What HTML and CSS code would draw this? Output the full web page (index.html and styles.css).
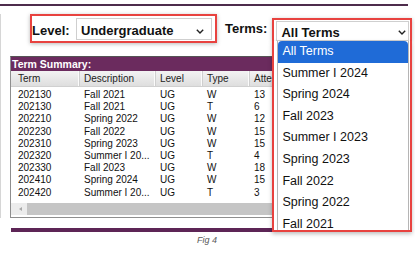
FILE: index.html
```html
<!DOCTYPE html>
<html lang="en">
<head>
<meta charset="utf-8">
<title>Term Summary</title>
<link rel="stylesheet" href="styles.css">
</head>
<body>
<div class="topline"></div>
<div class="content">
  <div class="filters">
    <div class="level-box">
      <span class="label">Level:</span>
      <div class="select level-select">
        <span class="select-text">Undergraduate</span>
        <svg class="chev" width="8" height="5" viewBox="0 0 8 5"><path d="M0.8 0.8 L4 4 L7.2 0.8" fill="none" stroke="#222" stroke-width="1.4"/></svg>
      </div>
    </div>
    <span class="label terms-label">Terms:</span>
    <div class="terms-box">
      <div class="select terms-select">
        <span class="select-text">All Terms</span>
        <svg class="chev" width="8" height="5" viewBox="0 0 8 5"><path d="M0.8 0.8 L4 4 L7.2 0.8" fill="none" stroke="#222" stroke-width="1.4"/></svg>
      </div>
      <div class="listbox">
        <ul class="options">
          <li class="opt selected">All Terms</li>
          <li class="opt">Summer I 2024</li>
          <li class="opt">Spring 2024</li>
          <li class="opt">Fall 2023</li>
          <li class="opt">Summer I 2023</li>
          <li class="opt">Spring 2023</li>
          <li class="opt">Fall 2022</li>
          <li class="opt">Spring 2022</li>
          <li class="opt">Fall 2021</li>
        </ul>
      </div>
    </div>
  </div>
  <div class="panel">
    <div class="panel-title">Term Summary:</div>
    <div class="grid head">
      <span>Term</span><span>Description</span><span>Level</span><span>Type</span><span>Atten</span>
    </div>
    <div class="rows">
      <div class="grid row"><span>202130</span><span>Fall 2021</span><span>UG</span><span>W</span><span>13</span></div>
      <div class="grid row"><span>202130</span><span>Fall 2021</span><span>UG</span><span>T</span><span>6</span></div>
      <div class="grid row"><span>202210</span><span>Spring 2022</span><span>UG</span><span>W</span><span>12</span></div>
      <div class="grid row"><span>202230</span><span>Fall 2022</span><span>UG</span><span>W</span><span>15</span></div>
      <div class="grid row"><span>202310</span><span>Spring 2023</span><span>UG</span><span>W</span><span>15</span></div>
      <div class="grid row"><span>202320</span><span>Summer I 20...</span><span>UG</span><span>T</span><span>4</span></div>
      <div class="grid row"><span>202330</span><span>Fall 2023</span><span>UG</span><span>W</span><span>18</span></div>
      <div class="grid row"><span>202410</span><span>Spring 2024</span><span>UG</span><span>W</span><span>15</span></div>
      <div class="grid row"><span>202420</span><span>Summer I 20...</span><span>UG</span><span>T</span><span>3</span></div>
    </div>
    <div class="hscroll">
      <span class="arrow"></span>
      <span class="thumb"></span>
    </div>
  </div>
</div>
<div class="bottombar"></div>
<div class="caption">Fig 4</div>
</body>
</html>
```
FILE: styles.css
```css
* { box-sizing: border-box; }
html, body { margin: 0; padding: 0; background: #fff; }
body {
  width: 415px;
  height: 253px;
  overflow: hidden;
  font-family: "Liberation Sans", Arial, sans-serif;
  color: #111;
}
.topline {
  margin-top: 4px;
  width: 408px;
  height: 2px;
  background: #4e2c4c;
}
.content {
  margin-top: 8px;
  border-left: 1px solid #d6d6d6;
}
.filters {
  display: flex;
  align-items: flex-start;
  height: 29px;
  padding-left: 29px;
  position: relative;
  z-index: 2;
}
.label {
  font-size: 13px;
  font-weight: bold;
  line-height: 15px;
  color: #111;
}
.level-box {
  width: 187px;
  height: 29px;
  border: 2px solid #e8423f;
  box-shadow: 0 1px 4px rgba(0,0,0,0.28);
  display: flex;
  align-items: flex-start;
  padding: 2px 3px 0 0;
  background: #fff;
}
.level-box .label { margin-top: 5px; }
.select {
  display: flex;
  align-items: center;
  background: #fff;
  border: 1px solid #cfcfcf;
}
.select-text {
  font-size: 13px;
  font-weight: bold;
  line-height: 15px;
  padding-top: 3px;
  color: #111;
}
.chev { margin-left: auto; margin-top: 4px; display: block; }
.level-select {
  margin-left: auto;
  width: 136px;
  height: 22px;
  padding: 0 7px 0 4px;
}
.terms-label { margin-left: 8px; margin-top: 7px; }
.terms-box {
  position: relative;
  margin-left: 5px;
  margin-top: 4px;
  width: 140px;
  border: 2px solid #e8423f;
  border-bottom: none;
  padding: 1px 1px 0 2px;
  background: #fff;
  box-shadow: 0 1px 4px rgba(0,0,0,0.25);
}
.terms-select {
  height: 20px;
  padding: 0 2px 0 4px;
}
.terms-select .select-text { padding-top: 2px; }
.terms-select .chev { margin-top: 3px; }
.listbox {
  position: absolute;
  top: 100%;
  left: -2px;
  width: 140px;
  height: 191px;
  border: 2px solid #e8423f;
  border-top: none;
  padding: 0 1px 0 3px;
  background: #fff;
  box-shadow: 0 2px 4px rgba(0,0,0,0.25);
}
.options {
  list-style: none;
  margin: 0;
  padding: 0;
  height: 189px;
  overflow: hidden;
  border-left: 1px solid #b5b5b5;
  border-right: 1px solid #b5b5b5;
}
.opt {
  height: 21.6px;
  line-height: 21.6px;
  font-size: 12.5px;
  padding-left: 4px;
  color: #111;
  white-space: nowrap;
}
.opt.selected {
  background: #1f6bd7;
  color: #fff;
  border-top-left-radius: 4px;
  border-top-right-radius: 4px;
}
.panel {
  margin-top: 13px;
  margin-left: 9px;
  width: 268px;
  border: 1px solid #8e8e8e;
  border-top-color: #555;
  background: #fff;
}
.panel-title {
  height: 14px;
  background: #6b2b5e;
  color: #fff;
  font-size: 10.5px;
  font-weight: bold;
  line-height: 14px;
  padding-left: 1px;
}
.grid {
  display: grid;
  grid-template-columns: 66px 76px 47px 47px 28px;
  padding-left: 2px;
  font-size: 10px;
  white-space: nowrap;
}
.grid span { padding-left: 5px; overflow: hidden; }
.head {
  height: 16px;
  line-height: 16px;
  background: linear-gradient(#f3f3f3, #dedede);
  border-bottom: 1px solid #d0d0d0;
  color: #222;
}
.head span { border-right: 1px solid #fbfbfb; box-shadow: 1px 0 0 #cfcfcf; }
.rows { padding-top: 2px; height: 116px; }
.row {
  height: 12.2px;
  line-height: 12.2px;
  color: #111;
}
.hscroll {
  display: flex;
  height: 12px;
  margin-bottom: 2px;
  background: #ececec;
}
.arrow {
  width: 16px;
  position: relative;
}
.arrow::before {
  content: "";
  position: absolute;
  left: 8px;
  top: 4px;
  border-right: 3px solid #a8a8a8;
  border-top: 2px solid transparent;
  border-bottom: 2px solid transparent;
}
.thumb {
  flex: 1;
  background: #c5c5c5;
}
.bottombar {
  margin-top: 10px;
  margin-left: 11px;
  width: 400px;
  height: 4px;
  background: #5d2556;
}
.caption {
  margin-top: 3px;
  margin-left: 197px;
  font-size: 9px;
  line-height: 10px;
  font-style: italic;
  color: #5a5a5a;
}
```
